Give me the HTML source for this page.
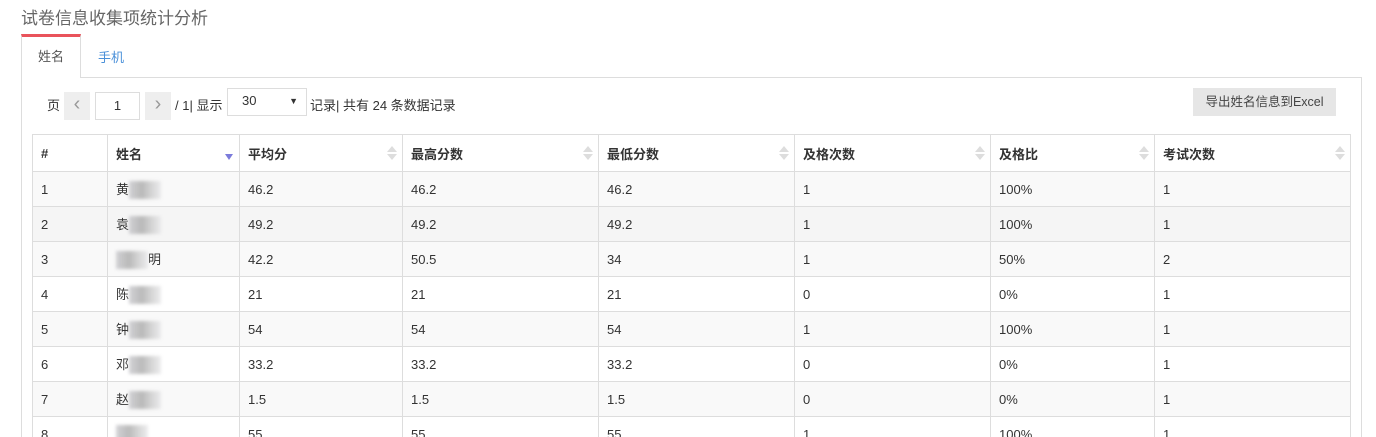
<!DOCTYPE html>
<html style="width:1376px;height:437px;overflow:hidden"><head><meta charset="utf-8"><style>
*{box-sizing:border-box;margin:0;padding:0}
body{width:1376px;height:437px;overflow:hidden;background:#fff;font-family:"Liberation Sans","Noto Sans CJK SC",sans-serif;font-size:13px;color:#333;position:relative}
.title{position:absolute;left:21px;top:4px;font-size:17px;color:#666}
.tab1{position:absolute;left:21px;top:34px;width:60px;height:44px;border:1px solid #ddd;border-top:3px solid #e9535b;border-bottom:none;background:#fff;text-align:center;line-height:40px;color:#555;z-index:2}
.tab2{position:absolute;left:98px;top:47px;color:#4a90d9;font-size:13px}
.panel{position:absolute;left:21px;top:77px;width:1341px;height:360px;border:1px solid #ddd;border-bottom:none}
.pg{position:absolute;top:92px;height:28px;line-height:28px}
.btn{position:absolute;background:#eee;color:#999;text-align:center}
table{position:absolute;left:32px;top:134px;border-collapse:collapse;table-layout:fixed}
td,th{border:1px solid #ddd;height:35px;padding:0 8px;text-align:left;font-size:13px}
th{height:37px;font-weight:bold;position:relative}
tr.o td{background:#f9f9f9}tr.h td{background:#f5f5f5}
.s{position:absolute;right:5px;top:11px;width:10px;height:16px}
.s:before{content:"";position:absolute;left:0;top:0;border:5px solid transparent;border-bottom:6px solid #ddd;border-top:0}
.s:after{content:"";position:absolute;left:0;top:8px;border:5px solid transparent;border-top:6px solid #ddd;border-bottom:0}
.d{position:absolute;right:6px;top:19px;border:4px solid transparent;border-top:6px solid #7b7bdb;border-bottom:0}
.bl{display:inline-block;width:32px;height:18px;vertical-align:middle;background:linear-gradient(90deg,#c8c8cc,#aaa 40%,#ccc 70%,#e8e8ea);filter:blur(1.5px);opacity:.8}
</style></head><body>
<div class="title">试卷信息收集项统计分析</div>
<div class="tab1">姓名</div>
<div class="tab2">手机</div>
<div class="panel"></div>
<div class="pg" style="left:47px">页</div>
<div class="btn" style="left:64px;top:92px;width:26px;height:28px;line-height:25px;font-size:20px">‹</div>
<div style="position:absolute;left:95px;top:92px;width:45px;height:28px;border:1px solid #ddd;text-align:center;line-height:26px">1</div>
<div class="btn" style="left:145px;top:92px;width:26px;height:28px;line-height:25px;font-size:20px">›</div>
<div class="pg" style="left:175px">/ 1| 显示</div>
<div style="position:absolute;left:227px;top:88px;width:80px;height:28px;border:1px solid #ddd;line-height:24px;padding-left:14px">30<span style="position:absolute;right:8px;top:0;font-size:9px">▼</span></div>
<div class="pg" style="left:310px">记录| 共有 24 条数据记录</div>
<div style="position:absolute;left:1193px;top:88px;width:143px;height:28px;background:#e6e6e6;text-align:center;line-height:28px;color:#444;font-size:12.5px">导出姓名信息到Excel</div>
<table>
<colgroup><col width="75"><col width="132"><col width="163"><col width="196"><col width="196"><col width="196"><col width="164"><col width="196"></colgroup>
<tr><th>#</th><th>姓名<span class="d"></span></th><th>平均分<span class="s"></span></th><th>最高分数<span class="s"></span></th><th>最低分数<span class="s"></span></th><th>及格次数<span class="s"></span></th><th>及格比<span class="s"></span></th><th>考试次数<span class="s"></span></th></tr>
<tr class="o"><td>1</td><td>黄<span class="bl"></span></td><td>46.2</td><td>46.2</td><td>46.2</td><td>1</td><td>100%</td><td>1</td></tr>
<tr class="h"><td>2</td><td>袁<span class="bl"></span></td><td>49.2</td><td>49.2</td><td>49.2</td><td>1</td><td>100%</td><td>1</td></tr>
<tr class="o"><td>3</td><td><span class="bl"></span>明</td><td>42.2</td><td>50.5</td><td>34</td><td>1</td><td>50%</td><td>2</td></tr>
<tr><td>4</td><td>陈<span class="bl"></span></td><td>21</td><td>21</td><td>21</td><td>0</td><td>0%</td><td>1</td></tr>
<tr class="o"><td>5</td><td>钟<span class="bl"></span></td><td>54</td><td>54</td><td>54</td><td>1</td><td>100%</td><td>1</td></tr>
<tr><td>6</td><td>邓<span class="bl"></span></td><td>33.2</td><td>33.2</td><td>33.2</td><td>0</td><td>0%</td><td>1</td></tr>
<tr class="o"><td>7</td><td>赵<span class="bl"></span></td><td>1.5</td><td>1.5</td><td>1.5</td><td>0</td><td>0%</td><td>1</td></tr>
<tr><td>8</td><td><span class="bl"></span></td><td>55</td><td>55</td><td>55</td><td>1</td><td>100%</td><td>1</td></tr>
</table>
</body></html>
